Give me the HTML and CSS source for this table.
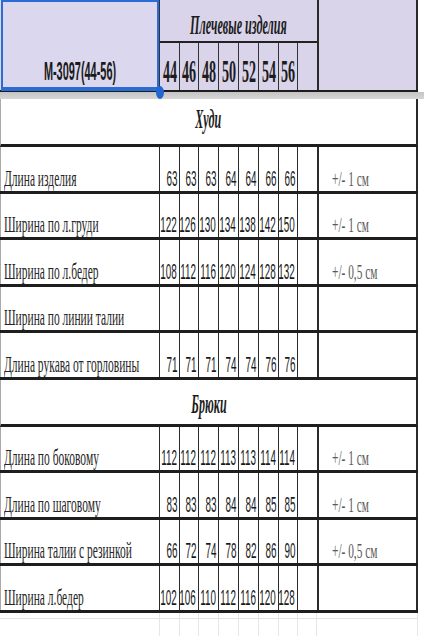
FILE: index.html
```html
<!DOCTYPE html>
<html lang="ru">
<head>
<meta charset="utf-8">
<title>M-3097</title>
<link rel="stylesheet" href="styles.css">
</head>
<body>
<div class="sheet">
  <div class="head">
    <div class="model"><span class="mtext">M-3097(44-56)</span><div class="sel"></div><div class="handle"></div></div>
    <div class="title"><span>Плечевые изделия</span></div>
    <div class="tolh"></div>
    <div class="hsize"><span>44</span></div>
    <div class="hsize"><span>46</span></div>
    <div class="hsize"><span>48</span></div>
    <div class="hsize"><span>50</span></div>
    <div class="hsize"><span>52</span></div>
    <div class="hsize"><span>54</span></div>
    <div class="hsize"><span>56</span></div>
    <div class="hsize blank"></div>
  </div>
  <div class="freeze"></div>

  <div class="section top"><span>Худи</span></div>

  <div class="row">
    <div class="label"><span>Длина изделия</span></div>
    <div class="num"><span>63</span></div><div class="num"><span>63</span></div><div class="num"><span>63</span></div><div class="num"><span>64</span></div><div class="num"><span>64</span></div><div class="num"><span>66</span></div><div class="num"><span>66</span></div>
    <div class="num blank"></div>
    <div class="tol"><span>+/- 1 см</span></div>
  </div>
  <div class="row">
    <div class="label"><span>Ширина по л.груди</span></div>
    <div class="num"><span>122</span></div><div class="num"><span>126</span></div><div class="num"><span>130</span></div><div class="num"><span>134</span></div><div class="num"><span>138</span></div><div class="num"><span>142</span></div><div class="num"><span>150</span></div>
    <div class="num blank"></div>
    <div class="tol"><span>+/- 1 см</span></div>
  </div>
  <div class="row">
    <div class="label"><span>Ширина по л.бедер</span></div>
    <div class="num"><span>108</span></div><div class="num"><span>112</span></div><div class="num"><span>116</span></div><div class="num"><span>120</span></div><div class="num"><span>124</span></div><div class="num"><span>128</span></div><div class="num"><span>132</span></div>
    <div class="num blank"></div>
    <div class="tol"><span>+/- 0,5 см</span></div>
  </div>
  <div class="row">
    <div class="label"><span>Ширина по линии талии</span></div>
    <div class="num"></div><div class="num"></div><div class="num"></div><div class="num"></div><div class="num"></div><div class="num"></div><div class="num"></div>
    <div class="num blank"></div>
    <div class="tol"></div>
  </div>
  <div class="row">
    <div class="label"><span>Длина рукава от горловины</span></div>
    <div class="num"><span>71</span></div><div class="num"><span>71</span></div><div class="num"><span>71</span></div><div class="num"><span>74</span></div><div class="num"><span>74</span></div><div class="num"><span>76</span></div><div class="num"><span>76</span></div>
    <div class="num blank"></div>
    <div class="tol"></div>
  </div>

  <div class="section mid"><span>Брюки</span></div>

  <div class="row">
    <div class="label"><span>Длина по боковому</span></div>
    <div class="num"><span>112</span></div><div class="num"><span>112</span></div><div class="num"><span>112</span></div><div class="num"><span>113</span></div><div class="num"><span>113</span></div><div class="num"><span>114</span></div><div class="num"><span>114</span></div>
    <div class="num blank"></div>
    <div class="tol"><span>+/- 1 см</span></div>
  </div>
  <div class="row">
    <div class="label"><span>Длина по шаговому</span></div>
    <div class="num"><span>83</span></div><div class="num"><span>83</span></div><div class="num"><span>83</span></div><div class="num"><span>84</span></div><div class="num"><span>84</span></div><div class="num"><span>85</span></div><div class="num"><span>85</span></div>
    <div class="num blank"></div>
    <div class="tol"><span>+/- 1 см</span></div>
  </div>
  <div class="row">
    <div class="label"><span>Ширина талии с резинкой</span></div>
    <div class="num"><span>66</span></div><div class="num"><span>72</span></div><div class="num"><span>74</span></div><div class="num"><span>78</span></div><div class="num"><span>82</span></div><div class="num"><span>86</span></div><div class="num"><span>90</span></div>
    <div class="num blank"></div>
    <div class="tol"><span>+/- 0,5 см</span></div>
  </div>
  <div class="row">
    <div class="label"><span>Ширина л.бедер</span></div>
    <div class="num"><span>102</span></div><div class="num"><span>106</span></div><div class="num"><span>110</span></div><div class="num"><span>112</span></div><div class="num"><span>116</span></div><div class="num"><span>120</span></div><div class="num"><span>128</span></div>
    <div class="num blank"></div>
    <div class="tol"></div>
  </div>

  <div class="tail short">
    <div></div><div></div><div></div><div></div><div></div><div></div><div></div><div></div><div></div><div></div>
  </div>
  <div class="tail">
    <div></div><div></div><div></div><div></div><div></div><div></div><div></div><div></div><div></div><div></div>
  </div>
</div>
</body>
</html>
```
FILE: styles.css
```css
* { box-sizing: border-box; margin: 0; padding: 0; }
html, body { background: #ffffff; }
body {
  width: 424px;
  height: 636px;
  overflow: hidden;
  font-family: "Liberation Serif", serif;
  color: #1e1e1e;
}
.sheet { width: 418px; }

.head, .row, .tail {
  display: grid;
  grid-template-columns: 160px 20px 19px 20px 20px 20px 20px 19px 19px 101px;
}

/* header */
.head {
  grid-template-rows: 43px 47px;
  height: 92px;
  background: #d9d4ea;
  border-bottom: 2px solid #1d1d1d;
}
.model {
  grid-column: 1;
  grid-row: 1 / 3;
  position: relative;
  display: flex;
  justify-content: center;
  align-items: flex-end;
  padding-bottom: 6px;
  border-right: 1px solid #333;
  background: #dbd7ee;
}
.mtext {
  display: inline-block;
  white-space: nowrap;
  font: bold 26px/1 "Liberation Sans", Arial, sans-serif;
  color: #1a1a1a;
  transform: scaleX(0.42);
  transform-origin: center bottom;
}
.sel {
  position: absolute;
  left: 1px;
  top: 0;
  right: 0;
  bottom: -1px;
  border: 2px solid #2b6cd4;
  border-bottom-width: 4px;
}
.handle {
  position: absolute;
  left: 156px;
  top: 86px;
  width: 8px;
  height: 13px;
  border-radius: 50%;
  background: #2366d1;
  z-index: 2;
}
.title {
  grid-column: 2 / 10;
  grid-row: 1;
  display: flex;
  justify-content: center;
  align-items: flex-end;
  padding-bottom: 2px;
  border-bottom: 2px solid #222;
}
.title span {
  display: inline-block;
  white-space: nowrap;
  font: italic bold 27px/1 "Liberation Serif", serif;
  color: #1c1c1c;
  transform: scaleX(0.45);
  transform-origin: center bottom;
}
.tolh {
  grid-column: 10;
  grid-row: 1 / 3;
  border-left: 2px solid #2a2a2a;
  border-right: 2px solid #2a2a2a;
}
.hsize {
  display: flex;
  justify-content: center;
  align-items: flex-end;
  padding-bottom: 3px;
  border-right: 1px solid #333;
}
.hsize.blank { border-right: none; }
.hsize span {
  display: inline-block;
  white-space: nowrap;
  font: bold 32px/1 "Liberation Serif", serif;
  color: #1c1c1c;
  transform: scaleX(0.44);
  transform-origin: center bottom;
}

.freeze {
  width: 424px;
  height: 7px;
  background: linear-gradient(#c4c4c4, #d6d6d6);
}

/* sections */
.section {
  display: flex;
  justify-content: center;
  align-items: flex-end;
  border-left: 1px solid #aaa;
  border-right: 2px solid #2a2a2a;
  border-bottom: 3px solid #1e1e1e;
}
.section.top { height: 48px; padding-bottom: 11px; }
.section.mid { height: 47px; padding-bottom: 6px; }
.section span {
  display: inline-block;
  white-space: nowrap;
  font: italic bold 28px/1 "Liberation Serif", serif;
  color: #1c1c1c;
  transform: scaleX(0.43);
  transform-origin: center bottom;
}

/* data rows */
.row {
  height: 46.5px;
  border-bottom: 3px solid #1e1e1e;
}
.row > div {
  display: flex;
  align-items: flex-end;
  padding-bottom: 1px;
}
.label {
  justify-content: flex-start;
  padding-left: 3px;
  border-left: 1px solid #aaa;
  border-right: 1px solid #2b2b2b;
}
.label span {
  display: inline-block;
  white-space: nowrap;
  font: 23px/1 "Liberation Serif", serif;
  color: #262626;
  transform: scaleX(0.5);
  transform-origin: left bottom;
}
.num {
  justify-content: flex-end;
  padding-right: 2px;
  border-right: 1px solid #2b2b2b;
}
.num.blank { border-right: none; }
.num span {
  display: inline-block;
  white-space: nowrap;
  font: 22px/1 "Liberation Sans", Arial, sans-serif;
  color: #1a1a1a;
  transform: scaleX(0.45);
  transform-origin: right bottom;
}
.tol {
  justify-content: flex-start;
  padding-left: 13px;
  border-left: 2px solid #2b2b2b;
  border-right: 2px solid #2b2b2b;
}
.tol span {
  display: inline-block;
  white-space: nowrap;
  font: 21px/1 "Liberation Serif", serif;
  color: #5a5a5a;
  transform: scaleX(0.54);
  transform-origin: left bottom;
}

/* faint spreadsheet grid below the table */
.tail { height: 18px; }
.tail.short { height: 6px; border-bottom: 1px solid #e4e4e4; }
.tail > div { border-right: 1px solid #e6e6e6; }
```
